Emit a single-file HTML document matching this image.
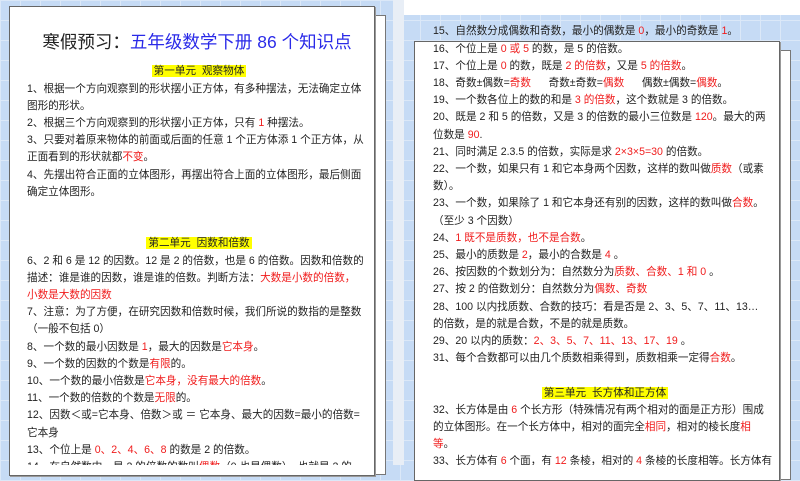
<!DOCTYPE html>
<html><head><meta charset="utf-8">
<style>
*{margin:0;padding:0;box-sizing:border-box}
body{width:800px;height:465px;overflow:hidden;position:relative;font-family:"Liberation Sans","Noto Sans CJK SC",sans-serif;color:#222;
background-color:#c6dbf5;
background-image:linear-gradient(#dbe8f8 1px,transparent 1px),linear-gradient(90deg,#dbe8f8 1px,transparent 1px);
background-size:20px 20px;}
.pg{position:absolute;background:#fff;border:1px solid #666;}
.r{color:#f01c1c}
.t{position:absolute;font-size:10.6px;line-height:17.2px;white-space:nowrap;overflow:hidden}
.h{background:#ffff00;padding:0 2px}
</style></head><body>
<div class="pg" style="left:20px;top:15px;width:366px;height:460px;border-color:#777"></div>
<div class="pg" style="left:9px;top:6px;width:366px;height:470px;box-shadow:1px 1px 0 #999"></div>
<div style="position:absolute;left:393px;top:0;width:11px;height:465px;background:#e8eef6"></div>
<div style="position:absolute;left:404px;top:0;width:396px;height:15px;background:#fff"></div>
<div class="pg" style="left:425px;top:50px;width:366px;height:430px;border-color:#777"></div>
<div class="pg" style="left:414px;top:41px;width:366px;height:440px;box-shadow:1px 1px 0 #999"></div>

<div style="position:absolute;left:9px;width:376px;top:30px;text-align:center;font-size:17.5px;line-height:24px;white-space:nowrap">寒假预习：<span style="color:#2a2ae8">五年级数学下册 86 个知识点</span></div>

<div class="t" style="left:27px;top:63.4px;width:344px;height:402px">
<div style="text-align:center"><span class="h">第一单元&nbsp; 观察物体</span></div>
<div>1、根据一个方向观察到的形状摆小正方体，有多种摆法，无法确定立体</div>
<div>图形的形状。</div>
<div>2、根据三个方向观察到的形状摆小正方体，只有 <span class="r">1</span> 种摆法。</div>
<div>3、只要对着原来物体的前面或后面的任意 1 个正方体添 1 个正方体，从</div>
<div>正面看到的形状就都<span class="r">不变</span>。</div>
<div>4、先摆出符合正面的立体图形，再摆出符合上面的立体图形，最后侧面</div>
<div>确定立体图形。</div>
<div>&nbsp;</div>
<div>&nbsp;</div>
<div style="text-align:center"><span class="h">第二单元&nbsp; 因数和倍数</span></div>
<div>6、2 和 6 是 12 的因数。12 是 2 的倍数，也是 6 的倍数。因数和倍数的</div>
<div>描述：谁是谁的因数，谁是谁的倍数。判断方法：<span class="r">大数是小数的倍数，</span></div>
<div class="r">小数是大数的因数</div>
<div>7、注意：为了方便，在研究因数和倍数时候，我们所说的数指的是整数</div>
<div>（一般不包括 0）</div>
<div>8、一个数的最小因数是 <span class="r">1</span>，最大的因数是<span class="r">它本身</span>。</div>
<div>9、一个数的因数的个数是<span class="r">有限</span>的。</div>
<div>10、一个数的最小倍数是<span class="r">它本身，没有最大的倍数</span>。</div>
<div>11、一个数的倍数的个数是<span class="r">无限</span>的。</div>
<div>12、因数＜或=它本身、倍数＞或 ＝ 它本身、最大的因数=最小的倍数=</div>
<div>它本身</div>
<div>13、个位上是 <span class="r">0、2、4、6、8</span> 的数是 2 的倍数。</div>
<div>14、在自然数中，是 2 的倍数的数叫<span class="r">偶数</span>（0 也是偶数），也就是 2 的</div>
</div>

<div class="t" style="left:433px;top:23.4px;width:344px;height:442px">
<div>15、自然数分成偶数和奇数，最小的偶数是 <span class="r">0</span>，最小的奇数是 <span class="r">1</span>。</div>
<div>16、个位上是 <span class="r">0 或 5</span> 的数，是 5 的倍数。</div>
<div>17、个位上是 <span class="r">0</span> 的数，既是 <span class="r">2 的倍数</span>，又是 <span class="r">5 的倍数</span>。</div>
<div>18、奇数±偶数=<span class="r">奇数</span>&nbsp;&nbsp;&nbsp;&nbsp;&nbsp; 奇数±奇数=<span class="r">偶数</span>&nbsp;&nbsp;&nbsp;&nbsp;&nbsp; 偶数±偶数=<span class="r">偶数</span>。</div>
<div>19、一个数各位上的数的和是 <span class="r">3 的倍数</span>，这个数就是 3 的倍数。</div>
<div>20、既是 2 和 5 的倍数，又是 3 的倍数的最小三位数是 <span class="r">120</span>。最大的两</div>
<div>位数是 <span class="r">90</span>.</div>
<div>21、同时满足 2.3.5 的倍数，实际是求 <span class="r">2×3×5=30</span> 的倍数。</div>
<div>22、一个数，如果只有 1 和它本身两个因数，这样的数叫做<span class="r">质数</span>（或素</div>
<div>数）。</div>
<div>23、一个数，如果除了 1 和它本身还有别的因数，这样的数叫做<span class="r">合数</span>。</div>
<div>（至少 3 个因数）</div>
<div>24、<span class="r">1 既不是质数，也不是合数</span>。</div>
<div>25、最小的质数是 <span class="r">2</span>，最小的合数是 <span class="r">4</span> 。</div>
<div>26、按因数的个数划分为：自然数分为<span class="r">质数、合数、1 和 0</span> 。</div>
<div>27、按 2 的倍数划分：自然数分为<span class="r">偶数、奇数</span></div>
<div>28、100 以内找质数、合数的技巧：看是否是 2、3、5、7、11、13…</div>
<div>的倍数，是的就是合数，不是的就是质数。</div>
<div>29、20 以内的质数：<span class="r">2、3、5、7、11、13、17、19</span> 。</div>
<div>31、每个合数都可以由几个质数相乘得到，质数相乘一定得<span class="r">合数</span>。</div>
<div>&nbsp;</div>
<div style="text-align:center"><span class="h">第三单元&nbsp; 长方体和正方体</span></div>
<div>32、长方体是由 <span class="r">6</span> 个长方形（特殊情况有两个相对的面是正方形）围成</div>
<div>的立体图形。在一个长方体中，相对的面完全<span class="r">相同</span>，相对的棱长度<span class="r">相</span></div>
<div><span class="r">等</span>。</div>
<div>33、长方体有 <span class="r">6</span> 个面，有 <span class="r">12</span> 条棱，相对的 <span class="r">4</span> 条棱的长度相等。长方体有</div>
</div>
</body></html>
